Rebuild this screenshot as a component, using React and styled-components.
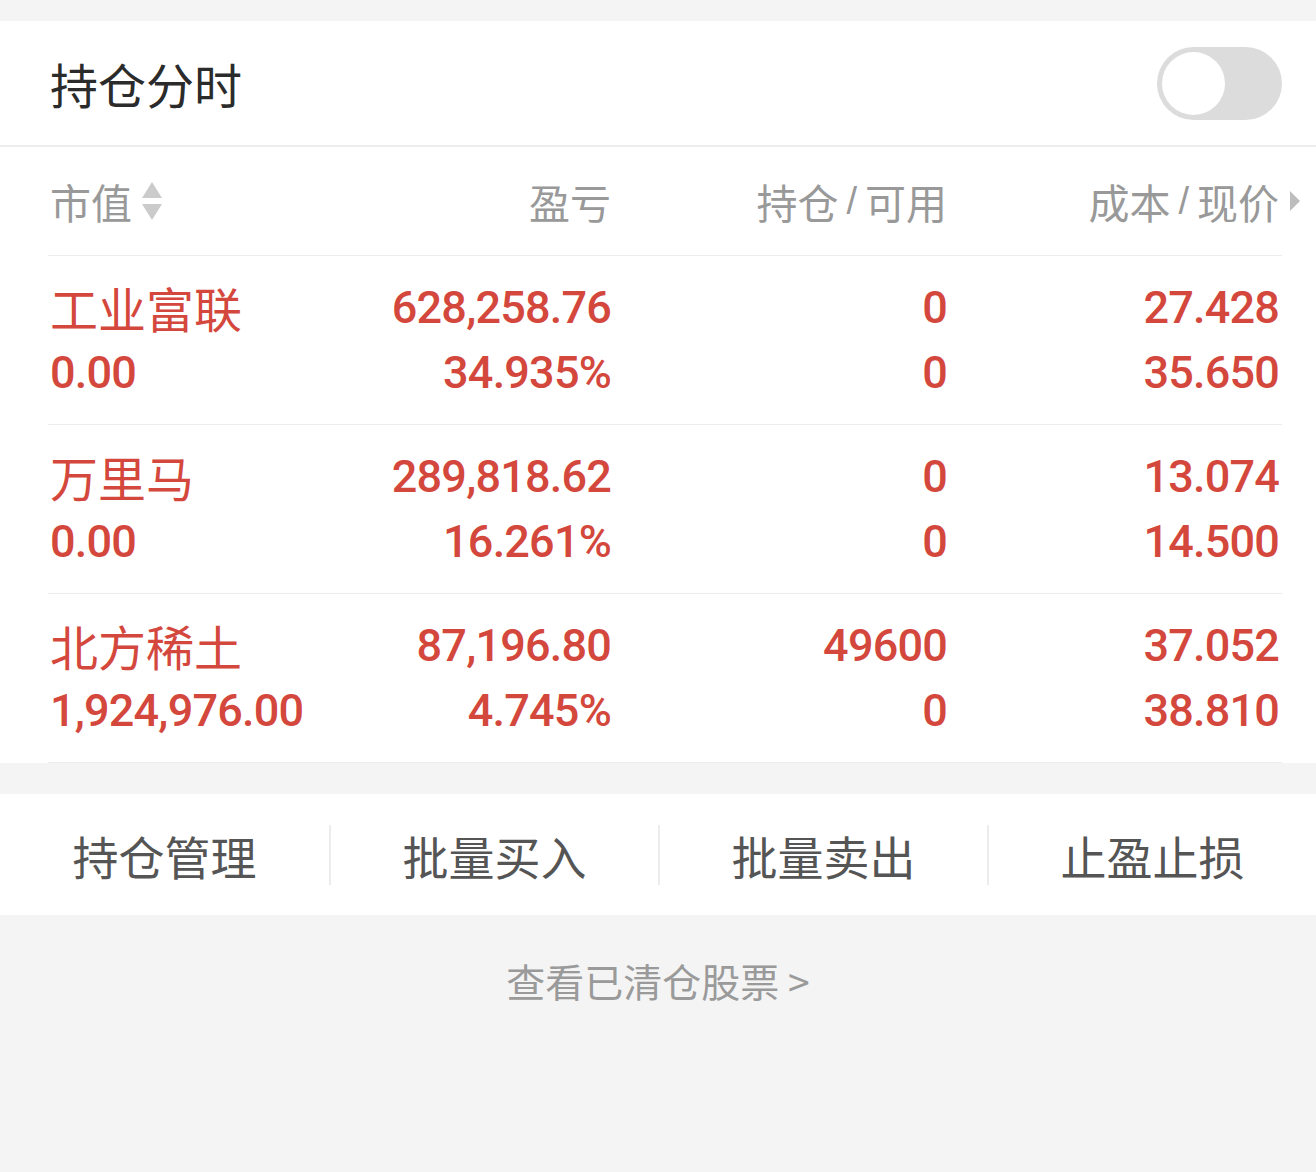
import styled, { createGlobalStyle } from 'styled-components';

const GlobalStyle = createGlobalStyle`
  html, body {
    margin: 0;
    padding: 0;
    background: #f4f4f4;
    font-family: "Noto Sans CJK SC", "Noto Sans", sans-serif;
  }
`;

const holdings = [
  { name: '工业富联', value: '0.00', profit: '628,258.76', ratio: '34.935%', hold: '0', avail: '0', cost: '27.428', price: '35.650' },
  { name: '万里马', value: '0.00', profit: '289,818.62', ratio: '16.261%', hold: '0', avail: '0', cost: '13.074', price: '14.500' },
  { name: '北方稀土', value: '1,924,976.00', profit: '87,196.80', ratio: '4.745%', hold: '49600', avail: '0', cost: '37.052', price: '38.810' },
];

const actions = ['持仓管理', '批量买入', '批量卖出', '止盈止损'];

const Page = styled.div`
  min-height: 1172px;
  padding-top: 21px;
  background: #f4f4f4;
`;

const Card = styled.div`
  background: #fff;
`;

const TitleBar = styled.div`
  height: 124px;
  display: flex;
  align-items: center;
  justify-content: space-between;
  padding: 0 34px 0 50px;
  border-bottom: 2px solid #ececec;
`;

const Title = styled.div`
  font-size: 48px;
  color: #2b2b2b;
`;

const Toggle = styled.div`
  width: 125px;
  height: 73px;
  border-radius: 37px;
  background: #dcdcdc;
  display: flex;
  align-items: center;
  padding-left: 5px;
  box-sizing: border-box;
`;

const Knob = styled.div`
  width: 63px;
  height: 63px;
  border-radius: 50%;
  background: #fff;
`;

const Table = styled.div`
  margin: 0 34px 0 48px;
`;

const Row = styled.div`
  display: grid;
  grid-template-columns: 282px 279px 336px 1fr;
  padding: 0 3px 0 2px;
  border-bottom: 1px solid #ececec;
  height: ${p => (p.$head ? '108px' : '168px')};
  align-items: center;
`;

const HeadCell = styled.div`
  display: flex;
  align-items: center;
  justify-content: ${p => (p.$left ? 'flex-start' : 'flex-end')};
  font-size: 41px;
  color: #999;
  position: relative;
`;

const Slash = styled.span`
  margin: 0 8px;
  font-family: "Liberation Sans", sans-serif;
  font-size: 38px;
`;

const SortIcon = styled.svg`
  margin-left: 9px;
`;

const MoreArrow = styled.svg`
  position: absolute;
  right: -22px;
  top: 50%;
  transform: translateY(-50%);
`;

const Cell = styled.div`
  display: flex;
  flex-direction: column;
  align-items: ${p => (p.$left ? 'flex-start' : 'flex-end')};
  color: #d4473d;
`;

const Line = styled.div`
  height: 65px;
  line-height: 65px;
  font-size: ${p => (p.$cjk ? '48px' : '45px')};
  font-family: ${p => (p.$cjk ? '"Noto Sans CJK SC", sans-serif' : 'Roboto, "Noto Sans", sans-serif')};
  font-weight: ${p => (p.$cjk ? 400 : 500)};
  letter-spacing: ${p => (p.$cjk ? '0' : '-0.8px')};
`;

const Gap = styled.div`
  height: 31px;
  background: #f4f4f4;
`;

const ActionBar = styled.div`
  height: 121px;
  background: #fff;
  display: grid;
  grid-template-columns: repeat(4, 1fr);
  align-items: center;
`;

const Action = styled.div`
  height: 60px;
  display: flex;
  align-items: center;
  justify-content: center;
  font-size: 46px;
  color: #555;
  border-left: ${p => (p.$first ? 'none' : '2px solid #ececec')};
`;

const Cleared = styled.div`
  text-align: center;
  padding-top: 37px;
  font-size: 39px;
  color: #9a9a9a;
`;

export default function App() {
  return (
    <Page>
      <GlobalStyle />
      <Card>
        <TitleBar>
          <Title>持仓分时</Title>
          <Toggle>
            <Knob />
          </Toggle>
        </TitleBar>
        <Table>
          <Row $head>
            <HeadCell $left>
              市值
              <SortIcon width="22" height="40" viewBox="0 0 22 40">
                <path d="M11 1 L21 17 L1 17 Z" fill="#cbcbcb" />
                <path d="M1 23 L21 23 L11 39 Z" fill="#cbcbcb" />
              </SortIcon>
            </HeadCell>
            <HeadCell>盈亏</HeadCell>
            <HeadCell>
              持仓<Slash>/</Slash>可用
            </HeadCell>
            <HeadCell>
              成本<Slash>/</Slash>现价
              <MoreArrow width="12" height="20" viewBox="0 0 12 20">
                <path d="M1 0 L11 10 L1 20 Z" fill="#bdbdbd" />
              </MoreArrow>
            </HeadCell>
          </Row>
          {holdings.map(h => (
            <Row key={h.name}>
              <Cell $left>
                <Line $cjk>{h.name}</Line>
                <Line>{h.value}</Line>
              </Cell>
              <Cell>
                <Line>{h.profit}</Line>
                <Line>{h.ratio}</Line>
              </Cell>
              <Cell>
                <Line>{h.hold}</Line>
                <Line>{h.avail}</Line>
              </Cell>
              <Cell>
                <Line>{h.cost}</Line>
                <Line>{h.price}</Line>
              </Cell>
            </Row>
          ))}
        </Table>
      </Card>
      <Gap />
      <ActionBar>
        {actions.map((a, i) => (
          <Action key={a} $first={i === 0}>{a}</Action>
        ))}
      </ActionBar>
      <Cleared>查看已清仓股票 &gt;</Cleared>
    </Page>
  );
}
